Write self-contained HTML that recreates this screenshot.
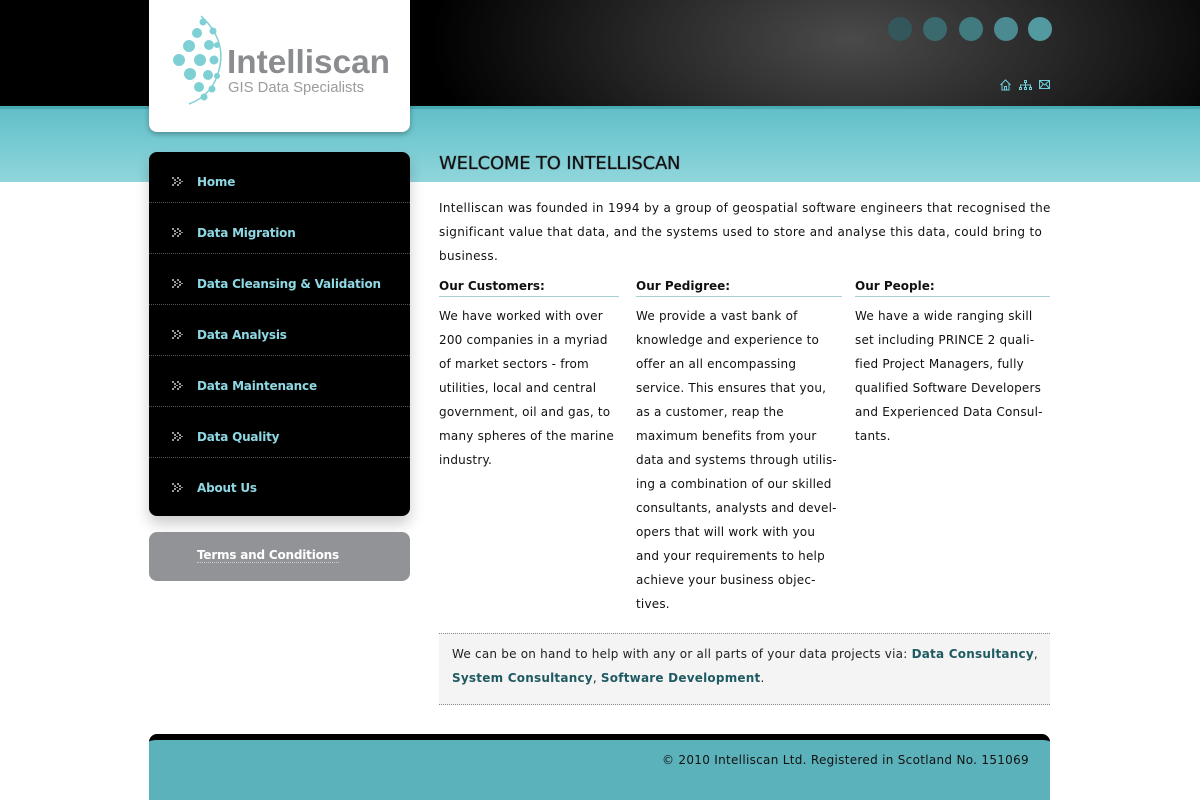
<!DOCTYPE html>
<html><head><meta charset="utf-8"><style>
*{margin:0;padding:0;box-sizing:border-box}
body{width:1200px;height:800px;overflow:hidden;background:#fff;font-family:"DejaVu Sans",sans-serif;font-size:12px;color:#111;position:relative}
.hdr{position:absolute;left:0;top:0;width:1200px;height:106px;background:radial-gradient(ellipse 420px 200px at 850px 40px,#4a4a4a 0%,#2a2a2a 45%,#000 100%)}
.band{position:absolute;left:0;top:106px;width:1200px;height:76px;background:linear-gradient(#5fbec8,#90d6dc)}
.band:before{content:"";position:absolute;left:0;top:0;width:1200px;height:3px;background:#4aaab4}
.logo{position:absolute;left:149px;top:0;width:261px;height:132px;background:#fff;border-radius:0 0 8px 8px;box-shadow:0 2px 6px rgba(0,0,0,.3)}
.dot{position:absolute;width:24px;height:24px;border-radius:50%;top:17px}
.nav{position:absolute;left:149px;top:152px;width:261px;height:364px;background:#000;border-radius:8px;box-shadow:0 8px 14px rgba(0,0,0,.2)}
.nav div{height:51px;border-bottom:1px dotted #555;color:#8ed8e4;font-weight:bold;font-size:12px;padding-left:48px;line-height:60px;position:relative;white-space:nowrap;letter-spacing:-.2px}
.nav div:last-child{border-bottom:none}
.nav svg{position:absolute;left:23px;top:25px}
.terms{position:absolute;left:149px;top:532px;width:261px;height:49px;background:#929397;border-radius:8px;color:#fff;font-weight:bold;padding-left:48px;line-height:47px;letter-spacing:-.2px}
.terms span{border-bottom:1px dotted #ccc}
h1{position:absolute;left:439px;top:153px;font-family:"DejaVu Sans",sans-serif;font-size:18px;font-weight:normal;color:#111;text-shadow:0 0 1px #333;letter-spacing:-.2px}
.p{position:absolute;left:439px;top:196px;width:640px;line-height:24px;white-space:nowrap;letter-spacing:.33px}
.col{position:absolute;top:276px;line-height:24px;white-space:nowrap;letter-spacing:.2px}
.col b{display:block;border-bottom:1px solid #a8cfd2;line-height:20px;margin-bottom:7px;letter-spacing:0}
.box{position:absolute;left:439px;top:633px;width:611px;height:72px;background:#f4f4f4;border-top:1px dotted #888;border-bottom:1px dotted #888;padding:8px 13px;line-height:24px;color:#222;white-space:nowrap;letter-spacing:.22px}
.box b{color:#1f5a62}
.foot{position:absolute;left:149px;top:734px;width:901px;height:66px;background:#5bb2bb;border-top:6px solid #000;border-radius:8px 8px 0 0;text-align:right;padding-right:21px;line-height:40px;color:#111;letter-spacing:.3px}
</style></head><body>
<div class="hdr"></div>
<div class="band"></div>
<div class="dot" style="left:888px;background:#2f5c60;opacity:.8"></div>
<div class="dot" style="left:923px;background:#3a6a6e"></div>
<div class="dot" style="left:959px;background:#417a7f"></div>
<div class="dot" style="left:994px;background:#4a8a90"></div>
<div class="dot" style="left:1028px;background:#5299a0"></div>
<svg style="position:absolute;left:1000px;top:79px" width="52" height="12" fill="none" stroke="#6fd0dc" stroke-width="1">
<path d="M0.5 6L5.5 1L10.5 6M2 5V11H9V5M4.5 11V7.5H6.5V11"/>
<path d="M24.5 1.5h2v2h-2zM25.5 3.5V6M20.5 8.5V6H30.5V8.5M19.5 8.5h2v2h-2zM24.5 8.5h2v2h-2zM29.5 8.5h2v2h-2zM25.5 6V8.5"/>
<path d="M39.5 1.5h10v8h-10zM39.5 1.5l5 4.5 5-4.5M39.5 9.5l3.5-4M49.5 9.5l-3.5-4"/>
</svg>
<div class="logo">
<svg width="261" height="132" style="position:absolute;left:0;top:0">
<g fill="#7fd0d4">
<circle cx="30" cy="60" r="6"/><circle cx="40" cy="46" r="6"/><circle cx="41" cy="74" r="6"/><circle cx="51" cy="60" r="6"/>
<circle cx="48" cy="33" r="5"/><circle cx="50" cy="87" r="5"/><circle cx="60" cy="45" r="5"/><circle cx="59" cy="75" r="5"/><circle cx="65" cy="60" r="4.5"/>
<circle cx="54" cy="22" r="3.5"/><circle cx="55" cy="97" r="3.5"/><circle cx="64" cy="31" r="3.5"/><circle cx="63" cy="89" r="3.5"/><circle cx="68" cy="45" r="3"/><circle cx="68" cy="76" r="3"/>
</g>
<path d="M52 16 Q78 40 70 70 Q64 95 40 104" stroke="#7fd0d4" stroke-width="1.5" fill="none"/>
<text x="78" y="73" font-family="Liberation Sans,sans-serif" font-size="33" font-weight="bold" fill="#8a8c8f" textLength="163" lengthAdjust="spacingAndGlyphs">Intelliscan</text>
<text x="79" y="92" font-family="Liberation Sans,sans-serif" font-size="15" fill="#9a9c9f" textLength="136" lengthAdjust="spacingAndGlyphs">GIS Data Specialists</text>
</svg>
</div>
<div class="nav">
<div><svg width="11" height="9"><g fill="#999"><path d="M0 0h2v2H0zM2 2h2v2H2zM4 4h2v1H4zM2 5h2v2H2zM0 7h2v2H0zM5 0h2v2H5zM7 2h2v2H7zM9 4h2v1H9zM7 5h2v2H7zM5 7h2v2H5z"/></g></svg>Home</div>
<div><svg width="11" height="9"><g fill="#999"><path d="M0 0h2v2H0zM2 2h2v2H2zM4 4h2v1H4zM2 5h2v2H2zM0 7h2v2H0zM5 0h2v2H5zM7 2h2v2H7zM9 4h2v1H9zM7 5h2v2H7zM5 7h2v2H5z"/></g></svg>Data Migration</div>
<div><svg width="11" height="9"><g fill="#999"><path d="M0 0h2v2H0zM2 2h2v2H2zM4 4h2v1H4zM2 5h2v2H2zM0 7h2v2H0zM5 0h2v2H5zM7 2h2v2H7zM9 4h2v1H9zM7 5h2v2H7zM5 7h2v2H5z"/></g></svg>Data Cleansing &amp; Validation</div>
<div><svg width="11" height="9"><g fill="#999"><path d="M0 0h2v2H0zM2 2h2v2H2zM4 4h2v1H4zM2 5h2v2H2zM0 7h2v2H0zM5 0h2v2H5zM7 2h2v2H7zM9 4h2v1H9zM7 5h2v2H7zM5 7h2v2H5z"/></g></svg>Data Analysis</div>
<div><svg width="11" height="9"><g fill="#999"><path d="M0 0h2v2H0zM2 2h2v2H2zM4 4h2v1H4zM2 5h2v2H2zM0 7h2v2H0zM5 0h2v2H5zM7 2h2v2H7zM9 4h2v1H9zM7 5h2v2H7zM5 7h2v2H5z"/></g></svg>Data Maintenance</div>
<div><svg width="11" height="9"><g fill="#999"><path d="M0 0h2v2H0zM2 2h2v2H2zM4 4h2v1H4zM2 5h2v2H2zM0 7h2v2H0zM5 0h2v2H5zM7 2h2v2H7zM9 4h2v1H9zM7 5h2v2H7zM5 7h2v2H5z"/></g></svg>Data Quality</div>
<div><svg width="11" height="9"><g fill="#999"><path d="M0 0h2v2H0zM2 2h2v2H2zM4 4h2v1H4zM2 5h2v2H2zM0 7h2v2H0zM5 0h2v2H5zM7 2h2v2H7zM9 4h2v1H9zM7 5h2v2H7zM5 7h2v2H5z"/></g></svg>About Us</div>
</div>
<div class="terms"><span>Terms and Conditions</span></div>
<h1>WELCOME TO INTELLISCAN</h1>
<div class="p">Intelliscan was founded in 1994 by a group of geospatial software engineers that recognised the<br>significant value that data, and the systems used to store and analyse this data, could bring to<br>business.</div>
<div class="col" style="left:439px;width:180px"><b>Our Customers:</b>We have worked with over<br>200 companies in a myriad<br>of market sectors - from<br>utilities, local and central<br>government, oil and gas, to<br>many spheres of the marine<br>industry.</div>
<div class="col" style="left:636px;width:206px"><b>Our Pedigree:</b>We provide a vast bank of<br>knowledge and experience to<br>offer an all encompassing<br>service. This ensures that you,<br>as a customer, reap the<br>maximum benefits from your<br>data and systems through utilis-<br>ing a combination of our skilled<br>consultants, analysts and devel-<br>opers that will work with you<br>and your requirements to help<br>achieve your business objec-<br>tives.</div>
<div class="col" style="left:855px;width:195px"><b>Our People:</b>We have a wide ranging skill<br>set including PRINCE 2 quali-<br>fied Project Managers, fully<br>qualified Software Developers<br>and Experienced Data Consul-<br>tants.</div>
<div class="box">We can be on hand to help with any or all parts of your data projects via: <b>Data Consultancy</b>,<br><b>System Consultancy</b>, <b>Software Development</b>.</div>
<div class="foot">© 2010 Intelliscan Ltd. Registered in Scotland No. 151069</div>
</body></html>
